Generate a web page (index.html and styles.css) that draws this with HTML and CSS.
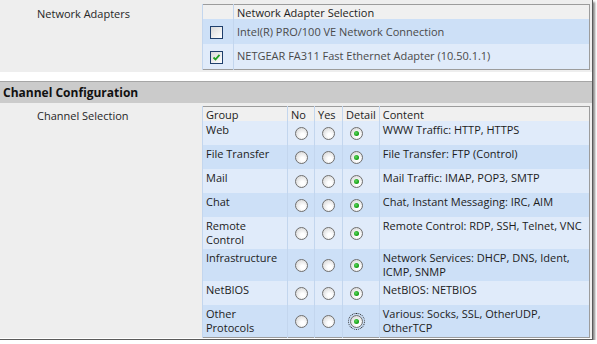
FILE: index.html
```html
<!doctype html>
<html lang="en">
<head>
    <meta charset="utf-8">
    <title>Channel Configuration</title>
    <link rel="stylesheet" href="styles.css">
</head>
<body>
    <div class="shot">
        <!-- adapters -->
        <div class="panel panel-top">
            <div class="field-label">Network Adapters</div>
            <table class="grid adapters">
                <colgroup><col class="c-chk"><col></colgroup>
                <tr class="head"><th></th><th>Network Adapter Selection</th></tr>
                <tr class="dark">
                    <td class="mid"><span class="box"></span></td>
                    <td class="soft">Intel(R) PRO/100 VE Network Connection</td>
                </tr>
                <tr class="light">
                    <td class="mid"><span class="box"><svg width="11" height="11" viewBox="0 0 11 11"><path d="M2.5 5.5 L4.5 7.5 L8.5 2.8" fill="none" stroke="#21a121" stroke-width="1.8"/></svg></span></td>
                    <td class="soft">NETGEAR FA311 Fast Ethernet Adapter (10.50.1.1)</td>
                </tr>
            </table>
        </div>

        <div class="gap"></div>
        <div class="section-head">Channel Configuration</div>

        <!-- channels -->
        <div class="panel panel-main">
            <div class="field-label">Channel Selection</div>
            <table class="grid channels">
                <colgroup>
                    <col class="c-group"><col class="c-no"><col class="c-yes"><col class="c-detail"><col>
                </colgroup>
                <tr class="head"><th>Group</th><th>No</th><th>Yes</th><th>Detail</th><th>Content</th></tr>
                <tr class="light r1">
                    <td>Web</td>
                    <td class="mid"><span class="radio"></span></td>
                    <td class="mid"><span class="radio"></span></td>
                    <td class="mid"><span class="radio on"></span></td>
                    <td>WWW Traffic: HTTP, HTTPS</td>
                </tr>
                <tr class="dark r1">
                    <td>File Transfer</td>
                    <td class="mid"><span class="radio"></span></td>
                    <td class="mid"><span class="radio"></span></td>
                    <td class="mid"><span class="radio on"></span></td>
                    <td>File Transfer: FTP (Control)</td>
                </tr>
                <tr class="light r1">
                    <td>Mail</td>
                    <td class="mid"><span class="radio"></span></td>
                    <td class="mid"><span class="radio"></span></td>
                    <td class="mid"><span class="radio on"></span></td>
                    <td>Mail Traffic: IMAP, POP3, SMTP</td>
                </tr>
                <tr class="dark r1">
                    <td>Chat</td>
                    <td class="mid"><span class="radio"></span></td>
                    <td class="mid"><span class="radio"></span></td>
                    <td class="mid"><span class="radio on"></span></td>
                    <td>Chat, Instant Messaging: IRC, AIM</td>
                </tr>
                <tr class="light r2">
                    <td>Remote<br>Control</td>
                    <td class="mid"><span class="radio"></span></td>
                    <td class="mid"><span class="radio"></span></td>
                    <td class="mid"><span class="radio on"></span></td>
                    <td>Remote Control: RDP, SSH, Telnet, VNC</td>
                </tr>
                <tr class="dark r2">
                    <td>Infrastructure</td>
                    <td class="mid"><span class="radio"></span></td>
                    <td class="mid"><span class="radio"></span></td>
                    <td class="mid"><span class="radio on"></span></td>
                    <td>Network Services: DHCP, DNS, Ident,<br>ICMP, SNMP</td>
                </tr>
                <tr class="light r1">
                    <td>NetBIOS</td>
                    <td class="mid"><span class="radio"></span></td>
                    <td class="mid"><span class="radio"></span></td>
                    <td class="mid"><span class="radio on"></span></td>
                    <td>NetBIOS: NETBIOS</td>
                </tr>
                <tr class="dark r2">
                    <td>Other<br>Protocols</td>
                    <td class="mid"><span class="radio"></span></td>
                    <td class="mid"><span class="radio"></span></td>
                    <td class="mid"><span class="radio on focus"></span></td>
                    <td>Various: Socks, SSL, OtherUDP,<br>OtherTCP</td>
                </tr>
            </table>
        </div>
    </div>
</body>
</html>
```

FILE: styles.css
```css
body {
    margin: 0;
    background: #ffffff;
    font-family: "Open Sans", "Noto Sans", sans-serif;
    font-size: 11px;
    color: #1c1c1c;
}

.shot {
    width: 592px;
    height: 339px;
    border-right: 1px solid #5a5a5a;
    border-bottom: 1px solid #5a5a5a;
    box-shadow: 2px 2px 2px #8a8a8a;
    background: #ffffff;
    overflow: hidden;
}

.panel {
    display: flex;
    background: #eeeeee;
    padding-right: 2px;
}

.panel-top {
    height: 72px;
    padding-top: 4px;
    box-sizing: border-box;
}

.panel-main {
    height: 235px;
    padding-top: 3px;
    box-sizing: border-box;
}

.gap {
    height: 9px;
}

.section-head {
    height: 22px;
    box-sizing: border-box;
    border-top: 1px solid #a6a6a6;
    background: #cbcbcb;
    padding: 2px 0 0 3px;
    font-weight: bold;
    font-size: 12px;
    color: #111111;
}

.field-label {
    width: 165px;
    padding: 2px 0 0 37px;
    color: #262626;
}

.grid {
    flex: 1;
    border-collapse: collapse;
    table-layout: fixed;
    border: 1px solid #9c9c9c;
    align-self: flex-start;
}

.grid th {
    height: 14px;
    padding: 0 3px;
    background: #f0f0f0;
    font-weight: normal;
    text-align: left;
    border-left: 1px solid #c3d6ee;
    line-height: 13px;
    color: #1c1c1c;
}

.grid td {
    padding: 2px 3px 0 3px;
    vertical-align: top;
    line-height: 14px;
    border-left: 1px solid #c3d6ee;
}

.grid td.mid {
    vertical-align: middle;
    text-align: left;
    padding: 0 0 0 7px;
}

.dark td { background: #cde0f7; }
.light td { background: #e0ebfa; }

.adapters .c-chk { width: 31px; }
.adapters tr.dark,
.adapters tr.light { height: 25px; }
.adapters td { vertical-align: middle; padding-top: 0; }
.adapters .soft { color: #4a4a4a; }

.channels .c-group { width: 85px; }
.channels .c-no { width: 27px; }
.channels .c-yes { width: 28px; }
.channels .c-detail { width: 34px; }
.r1 { height: 24px; }
.r2 { height: 32px; }

.box {
    display: inline-block;
    width: 11px;
    height: 11px;
    border: 1px solid #1f3f6c;
    background: linear-gradient(135deg, #d9d9d9, #ffffff);
    vertical-align: middle;
}

.box svg { display: block; }

.radio {
    display: inline-block;
    position: relative;
    width: 11px;
    height: 11px;
    border: 1px solid #6f6f6f;
    border-radius: 50%;
    background: radial-gradient(circle at 60% 65%, #ffffff 20%, #d4d4d4 90%);
    vertical-align: middle;
}

.radio.on::after {
    content: "";
    position: absolute;
    left: 3px;
    top: 3px;
    width: 5px;
    height: 5px;
    border-radius: 50%;
    background: radial-gradient(circle at 40% 40%, #5fd85f, #0f9a0f 70%);
}

.radio.focus {
    outline: 1px dotted #222222;
    outline-offset: 1px;
}
```
